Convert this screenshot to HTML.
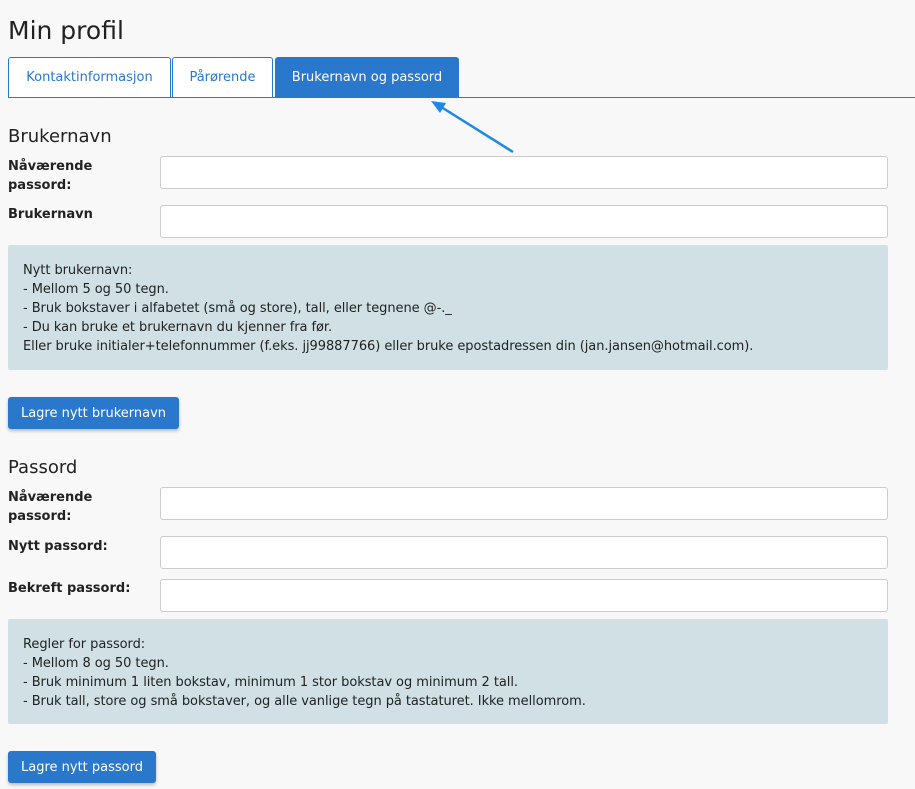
<!DOCTYPE html>
<html><head><meta charset="utf-8"><style>
body{margin:0;width:915px;height:789px;background:#f8f8f8;font-family:"DejaVu Sans","Liberation Sans",sans-serif;color:#222;position:relative;overflow:hidden}
.a{position:absolute}
h1{position:absolute;left:8px;top:16px;margin:0;font-weight:normal;font-size:25px;color:#222}
.tab{position:absolute;top:57px;border:1px solid #2a78cc;border-bottom:none;border-radius:3px 3px 0 0;background:#fff;color:#2a78cc;font-size:13px;line-height:40px;text-align:center;box-sizing:border-box;height:41px}
.line{position:absolute;left:8px;right:0;top:97px;height:1px;background:#2a78cc}
h2{position:absolute;left:8px;margin:0;font-weight:normal;font-size:18px}
.lab{position:absolute;left:8px;font-weight:bold;font-size:13px;line-height:19px}
.in{position:absolute;left:160px;width:728px;height:33px;box-sizing:border-box;background:#fff;border:1px solid #ccc;border-radius:3px}
.box{position:absolute;left:8px;width:880px;background:#d0e0e4;border-radius:2px;font-size:13px;line-height:19px;padding:15px;box-sizing:border-box;letter-spacing:-0.06px}
.btn{position:absolute;left:8px;height:32px;background:#2a78cc;color:#fff;border-radius:3px;font-size:13px;line-height:33px;text-align:center;box-shadow:0 2px 3px rgba(0,0,0,.25)}
</style></head><body>
<h1>Min profil</h1>
<div class="tab" style="left:8px;width:163px">Kontaktinformasjon</div>
<div class="tab" style="left:172px;width:101px">Pårørende</div>
<div class="tab" style="left:275px;width:184px;background:#2a78cc;color:#fff">Brukernavn og passord</div>
<div class="line"></div>
<svg class="a" style="left:0;top:0" width="915" height="200"><line x1="513" y1="152" x2="438" y2="105" stroke="#1e88e5" stroke-width="2.5"/><polygon points="431,101 446,103 440,113" fill="#1e88e5"/></svg>
<h2 style="top:126px">Brukernavn</h2>
<div class="lab" style="top:157px">Nåværende<br>passord:</div>
<div class="in" style="top:156px"></div>
<div class="lab" style="top:205px">Brukernavn</div>
<div class="in" style="top:205px"></div>
<div class="box" style="top:245px;height:125px;padding-top:16px">Nytt brukernavn:<br>- Mellom 5 og 50 tegn.<br>- Bruk bokstaver i alfabetet (små og store), tall, eller tegnene @-._<br>- Du kan bruke et brukernavn du kjenner fra før.<br>Eller bruke initialer+telefonnummer (f.eks. jj99887766) eller bruke epostadressen din (jan.jansen@hotmail.com).</div>
<div class="btn" style="top:397px;width:171px">Lagre nytt brukernavn</div>
<h2 style="top:457px">Passord</h2>
<div class="lab" style="top:488px">Nåværende<br>passord:</div>
<div class="in" style="top:487px"></div>
<div class="lab" style="top:537px">Nytt passord:</div>
<div class="in" style="top:536px"></div>
<div class="lab" style="top:579px">Bekreft passord:</div>
<div class="in" style="top:579px"></div>
<div class="box" style="top:619px;height:105px;padding-top:16px">Regler for passord:<br>- Mellom 8 og 50 tegn.<br>- Bruk minimum 1 liten bokstav, minimum 1 stor bokstav og minimum 2 tall.<br>- Bruk tall, store og små bokstaver, og alle vanlige tegn på tastaturet. Ikke mellomrom.</div>
<div class="btn" style="top:751px;width:148px">Lagre nytt passord</div>
</body></html>
